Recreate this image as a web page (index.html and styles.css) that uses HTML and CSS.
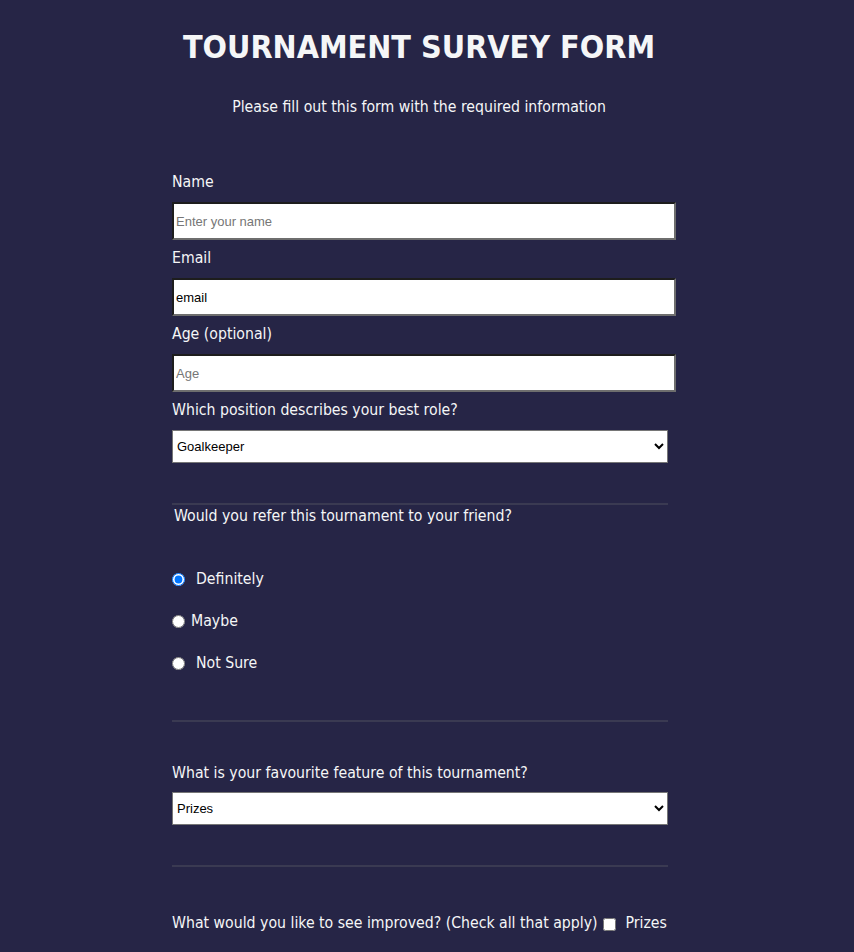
FILE: index.html
```html
<!DOCTYPE html>
<html lang="en">
<head>
<meta charset="utf-8">
<title>Tournament Survey Form</title>
<link rel="stylesheet" href="styles.css">
</head>
<body>
<div class="page">
  <header class="intro">
    <h1 class="title">TOURNAMENT SURVEY FORM</h1>
    <p class="description">Please fill out this form with the required information</p>
  </header>
  <form class="survey">
    <label class="field-label" for="name">Name</label>
    <input class="text-input" id="name" type="text" placeholder="Enter your name">
    <label class="field-label gap-sm" for="email">Email</label>
    <input class="text-input" id="email" type="email" value="email">
    <label class="field-label gap-sm" for="age">Age (optional)</label>
    <input class="text-input" id="age" type="number" placeholder="Age">
    <label class="field-label gap-sm" for="role">Which position describes your best role?</label>
    <select class="dropdown" id="role">
      <option>Goalkeeper</option>
      <option>Defender</option>
      <option>Midfielder</option>
      <option>Forward</option>
    </select>
    <div class="rule rule-first"></div>
    <p class="question">Would you refer this tournament to your friend?</p>
    <div class="radio-list">
      <label class="radio-row"><input class="radio" type="radio" name="refer" checked><span class="opt wide">Definitely</span></label>
      <label class="radio-row"><input class="radio" type="radio" name="refer"><span class="opt">Maybe</span></label>
      <label class="radio-row"><input class="radio" type="radio" name="refer"><span class="opt wide">Not Sure</span></label>
    </div>
    <div class="rule rule-second"></div>
    <label class="field-label feature-label" for="feature">What is your favourite feature of this tournament?</label>
    <select class="dropdown" id="feature">
      <option>Prizes</option>
      <option>Organisation</option>
      <option>Venue</option>
    </select>
    <div class="rule rule-third"></div>
    <div class="improve">What would you like to see improved? (Check all that apply)<input class="check" type="checkbox"><span class="check-text">Prizes</span></div>
  </form>
</div>
</body>
</html>
```
FILE: styles.css
```css
html, body {
  margin: 0;
  padding: 0;
}
body {
  background: #262546;
  color: #f5f6f7;
  font-family: "DejaVu Sans Condensed", "DejaVu Sans", sans-serif;
  font-stretch: condensed;
  font-size: 15.7px;
  height: 952px;
  overflow: hidden;
}
.page {
  width: 838px;
}
.intro {
  text-align: center;
}
.title {
  margin: 28px 0 0;
  font-size: 32px;
  line-height: 38px;
  font-weight: bold;
}
.description {
  margin: 31px 0 0;
  font-size: 15.7px;
  line-height: 20px;
}
.survey {
  width: 504px;
  margin: 55px 0 0 172px;
  display: flex;
  flex-direction: column;
  align-items: flex-start;
}
.field-label {
  display: block;
  line-height: 20px;
  margin: 0 0 10px;
}
.gap-sm {
  margin-top: 8px;
}
.text-input {
  box-sizing: border-box;
  width: 504px;
  height: 38px;
  margin: 0;
  padding: 0 2px;
  background: #fff;
  border-style: solid;
  border-width: 2px;
  border-color: #1d1d1d #6e6e6e #6e6e6e #1d1d1d;
  font-family: "Liberation Sans", Arial, sans-serif;
  font-size: 13px;
  color: #000;
  outline: none;
}
.text-input::placeholder {
  color: #767676;
}
.dropdown {
  box-sizing: border-box;
  width: 496px;
  height: 33px;
  margin: 0;
  padding: 0;
  background: #fff;
  border: 1px solid #767676;
  border-radius: 0;
  font-family: "Liberation Sans", Arial, sans-serif;
  font-size: 13px;
  color: #000;
}
.rule {
  width: 496px;
  height: 2px;
  background: #3a3a52;
}
.rule-first {
  margin-top: 40px;
}
.question {
  margin: 1px 0 0 2px;
  line-height: 20px;
}
.radio-list {
  margin-top: 42px;
  display: flex;
  flex-direction: column;
  gap: 22px;
}
.radio-row {
  display: flex;
  align-items: center;
  height: 20px;
}
.radio {
  margin: 2px 0 0 0;
  width: 13px;
  height: 13px;
}
.opt {
  margin-left: 6px;
}
.opt.wide {
  margin-left: 11px;
}
.rule-second {
  margin-top: 48px;
}
.feature-label {
  margin-top: 41px;
  margin-bottom: 9px;
}
.rule-third {
  margin-top: 40px;
}
.improve {
  margin-top: 46px;
  line-height: 20px;
  display: flex;
  align-items: center;
  white-space: nowrap;
}
.check {
  margin: 2px 0 0 5px;
  width: 13px;
  height: 13px;
}
.check-text {
  margin-left: 10px;
}
```
